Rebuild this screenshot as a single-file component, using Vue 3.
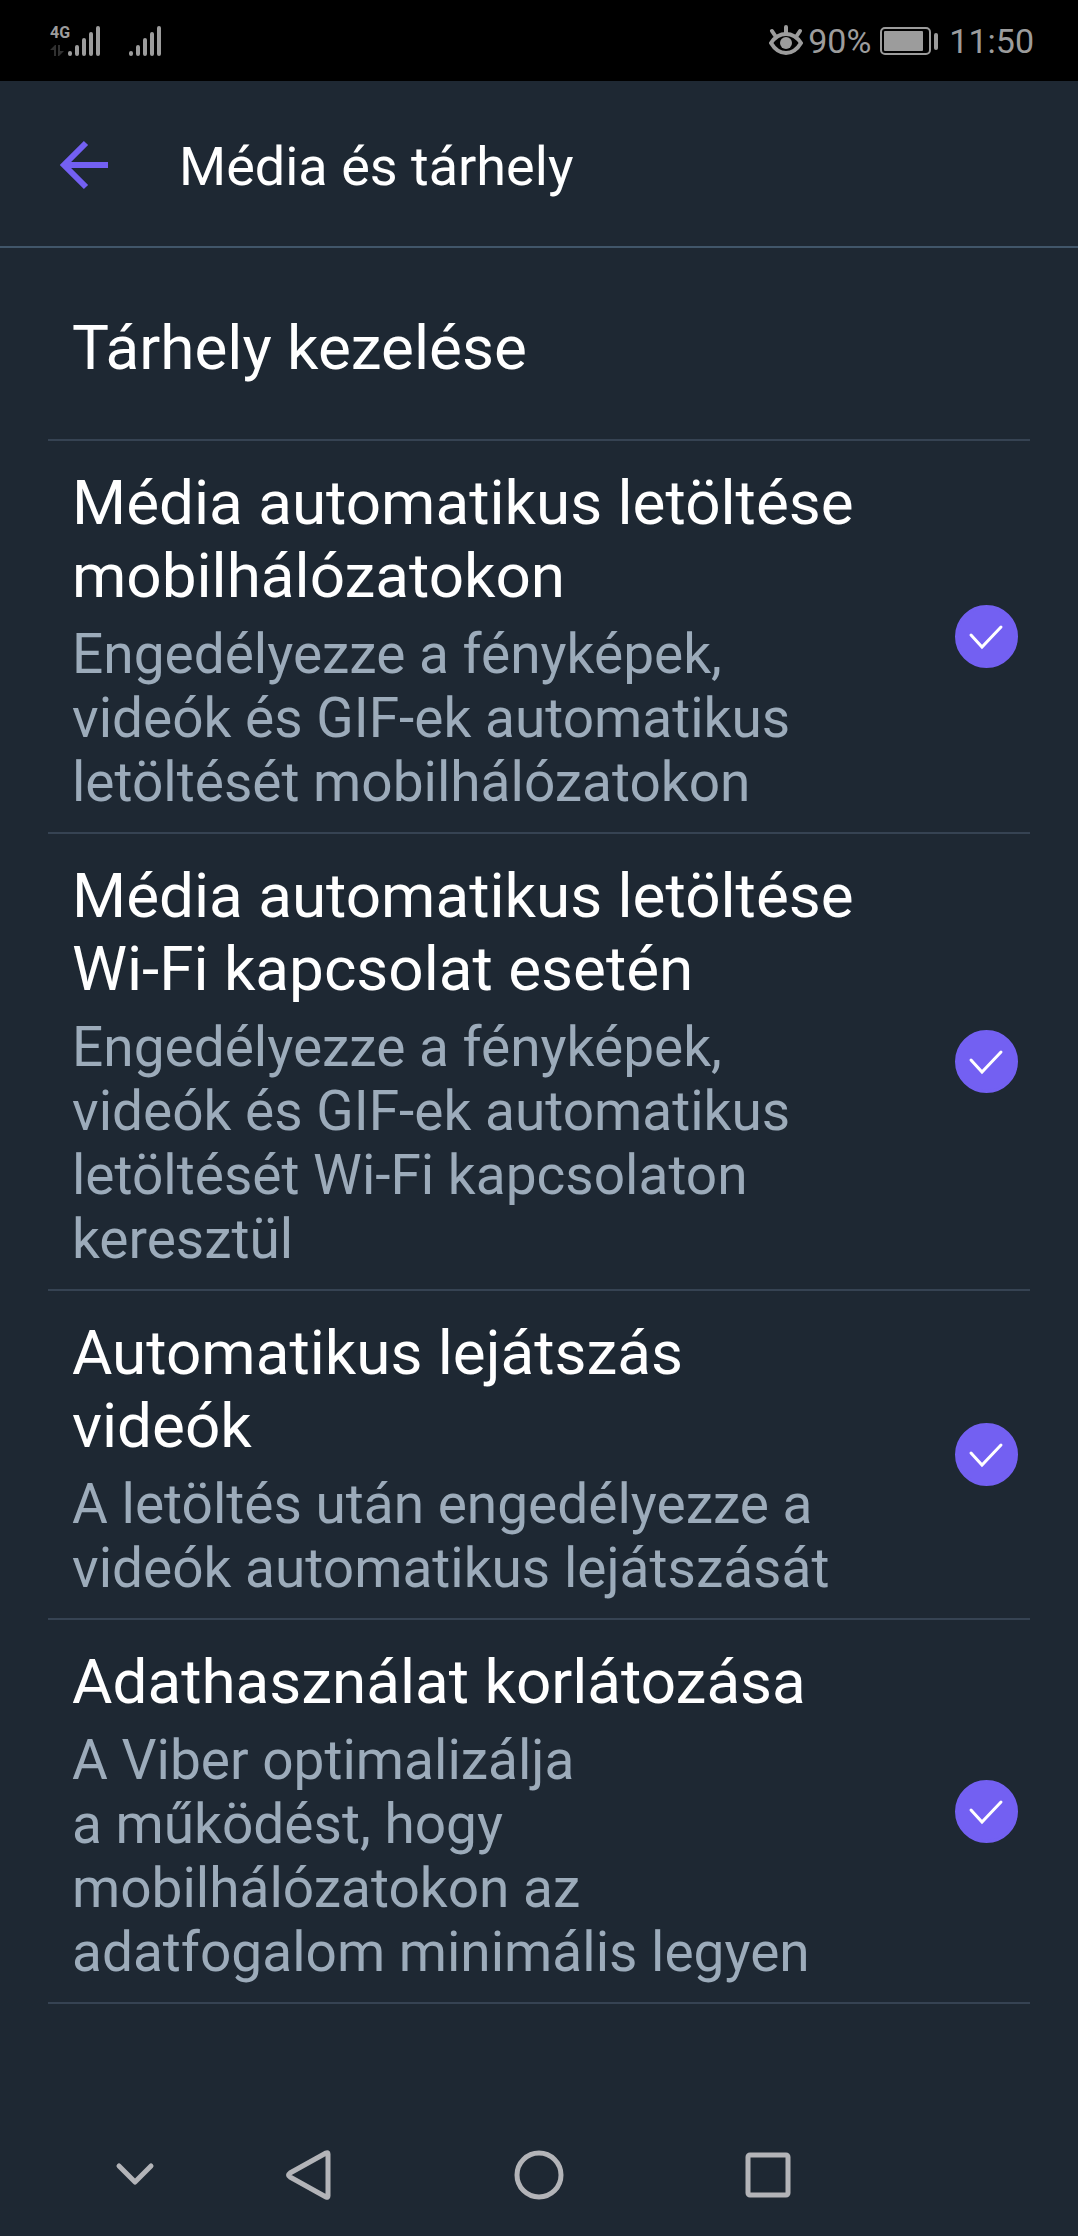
<script setup>
import { reactive } from 'vue'

const settings = reactive([
  {
    id: 'mobile',
    title: 'Média automatikus letöltése mobilhálózatokon',
    text: 'Engedélyezze a fényképek, videók és GIF-ek automatikus letöltését mobilhálózatokon',
    on: true,
  },
  {
    id: 'wifi',
    title: 'Média automatikus letöltése Wi-Fi kapcsolat esetén',
    text: 'Engedélyezze a fényképek, videók és GIF-ek automatikus letöltését Wi-Fi kapcsolaton keresztül',
    on: true,
  },
  {
    id: 'autoplay',
    title: 'Automatikus lejátszás videók',
    text: 'A letöltés után engedélyezze a videók automatikus lejátszását',
    on: true,
  },
  {
    id: 'data',
    title: 'Adathasználat korlátozása',
    text: 'A Viber optimalizálja a\u00a0működést, hogy mobilhálózatokon az adatfogalom minimális legyen',
    on: true,
  },
])
</script>

<template>
  <div class="screen">
    <div class="status">
      <div class="network">
        <span class="network-type">4G</span>
        <svg class="arrows" width="14" height="12" viewBox="0 0 14 12" aria-hidden="true">
          <path d="M0 5 5 0h1v11H4V5zM8 0h2v6h4l-5 5H8z" />
        </svg>
      </div>
      <svg class="bars" width="34" height="32" viewBox="0 0 34 32" aria-hidden="true">
        <path d="M3 28v1M10 22v7M17 15v14M24 9v20M31 3v26" />
      </svg>
      <svg class="bars second" width="34" height="32" viewBox="0 0 34 32" aria-hidden="true">
        <path d="M3 28v1M10 22v7M17 15v14M24 9v20M31 3v26" />
      </svg>
      <div class="status-right">
        <svg width="34" height="32" viewBox="0 0 34 32" aria-hidden="true">
          <path class="line" d="M2 18Q8 9 17 9t15 9q-6 10-15 10T2 18zM17 2v7M3 6l4 6M31 6l-4 6" />
          <circle class="fill" cx="17" cy="18" r="6" />
        </svg>
        <span class="percent">90%</span>
        <svg class="battery" width="58" height="28" viewBox="0 0 58 28" aria-hidden="true">
          <rect class="frame" x="1" y="1" width="49" height="26" rx="4" />
          <rect class="fill" x="4" y="4" width="39" height="20" rx="1" />
          <rect class="fill" x="54" y="6" width="4" height="17" rx="2" />
        </svg>
        <time class="clock">11:50</time>
      </div>
    </div>

    <header class="header">
      <button class="back" type="button" aria-label="Vissza">
        <svg width="50" height="50" viewBox="0 0 50 50" aria-hidden="true">
          <path d="M48 25H4M26 3 4 25l22 22" />
        </svg>
      </button>
      <h1>Média és tárhely</h1>
    </header>

    <main class="list">
      <button class="row manage" type="button">Tárhely kezelése</button>
      <label v-for="item in settings" :key="item.id" class="row" :for="item.id">
        <span class="copy">
          <span class="title">{{ item.title }}</span>
          <span class="text">{{ item.text }}</span>
        </span>
        <span class="check">
          <input :id="item.id" v-model="item.on" type="checkbox" />
          <svg v-if="item.on" viewBox="0 0 63 63" aria-hidden="true">
            <path d="M16 30 27 42 46 22" />
          </svg>
        </span>
      </label>
    </main>

    <nav class="nav">
      <button class="hide" type="button" aria-label="Elrejtés">
        <svg width="52" height="52" viewBox="0 0 52 52" aria-hidden="true">
          <path d="M10 17 26 33 42 17" />
        </svg>
      </button>
      <button type="button" aria-label="Vissza">
        <svg width="52" height="52" viewBox="0 0 52 52" aria-hidden="true">
          <path d="M42 4Q44 3 44 5V47Q44 49 42 48L6 28Q3 26 6 24z" />
        </svg>
      </button>
      <button type="button" aria-label="Kezdőképernyő">
        <svg width="52" height="52" viewBox="0 0 52 52" aria-hidden="true">
          <circle cx="26" cy="26" r="22" />
        </svg>
      </button>
      <button type="button" aria-label="Legutóbbiak">
        <svg width="52" height="52" viewBox="0 0 52 52" aria-hidden="true">
          <rect x="6" y="6" width="40" height="40" rx="2" />
        </svg>
      </button>
    </nav>
  </div>
</template>

<style>
body {
  margin: 0;
  background: #1e2833;
}
</style>

<style scoped>
.screen {
  display: flex;
  flex-direction: column;
  min-height: 100vh;
  background: #1e2833;
  color: #fff;
  font-family: Roboto, "Noto Sans", sans-serif;
}

button {
  margin: 0;
  padding: 0;
  border: 0;
  background: none;
  color: inherit;
  font: inherit;
}

svg {
  display: block;
  fill: none;
}

.status {
  display: flex;
  align-items: center;
  box-sizing: border-box;
  height: 81px;
  padding: 0 44px 0 50px;
  background: #000;
  color: #9c9c9c;
}

.network {
  display: flex;
  flex-direction: column;
  gap: 4px;
  width: 17px;
}

.network-type {
  font: bold 16px/16px "Liberation Sans Narrow", Roboto, sans-serif;
}

.arrows {
  fill: #303030;
}

.bars {
  stroke: #9c9c9c;
  stroke-width: 4;
  stroke-linecap: round;
}

.second {
  margin-left: 27px;
}

.status-right {
  display: flex;
  align-items: center;
  margin-left: auto;
  font-size: 34px;
  line-height: 40px;
}

.line {
  stroke: #9c9c9c;
  stroke-width: 4;
  stroke-linecap: round;
}

.fill {
  fill: #9c9c9c;
}

.frame {
  stroke: #9c9c9c;
  stroke-width: 2;
}

.percent {
  margin-left: 5px;
}

.battery {
  margin: 0 11px 0 9px;
}

.header {
  display: flex;
  align-items: center;
  box-sizing: border-box;
  height: 167px;
  padding: 2px 60px 0;
  border-bottom: 2px solid #41566a;
}

.back {
  stroke: #7360f2;
  stroke-width: 6;
}

h1 {
  margin: 5px 0 0 69px;
  font-size: 54px;
  font-weight: 400;
  line-height: 64px;
}

.list {
  padding: 0 48px;
}

.row {
  display: flex;
  align-items: center;
  justify-content: space-between;
  box-sizing: border-box;
  width: 100%;
  padding: 0 12px 0 24px;
  border-bottom: 2px solid #364353;
}

.manage {
  padding: 63px 24px 55px;
  font-size: 62px;
  line-height: 73px;
}

.copy {
  display: flex;
  flex: 1;
  flex-direction: column;
  gap: 10px;
  margin-right: 84px;
  padding: 25px 0 18px;
}

.title {
  font-size: 62px;
  line-height: 73px;
}

.text {
  color: #9cabba;
  font-size: 55px;
  line-height: 64px;
}

.check {
  position: relative;
  flex: none;
  width: 63px;
  height: 63px;
}

.check input {
  display: block;
  box-sizing: border-box;
  width: 100%;
  height: 100%;
  margin: 0;
  border: 3px solid #7360f2;
  border-radius: 50%;
  appearance: none;
}

.check input:checked {
  background: #7360f2;
}

.check svg {
  position: absolute;
  inset: 0;
  stroke: #fff;
  stroke-width: 3;
  stroke-linecap: round;
  pointer-events: none;
}

.nav {
  display: grid;
  grid-template-columns: 196fr 228fr 229fr 229fr 196fr;
  align-items: center;
  justify-items: center;
  height: 122px;
  margin-top: auto;
  stroke: #b3b4b8;
  stroke-width: 5;
  stroke-linecap: round;
  stroke-linejoin: round;
}

.hide {
  padding-left: 73px;
}
</style>
